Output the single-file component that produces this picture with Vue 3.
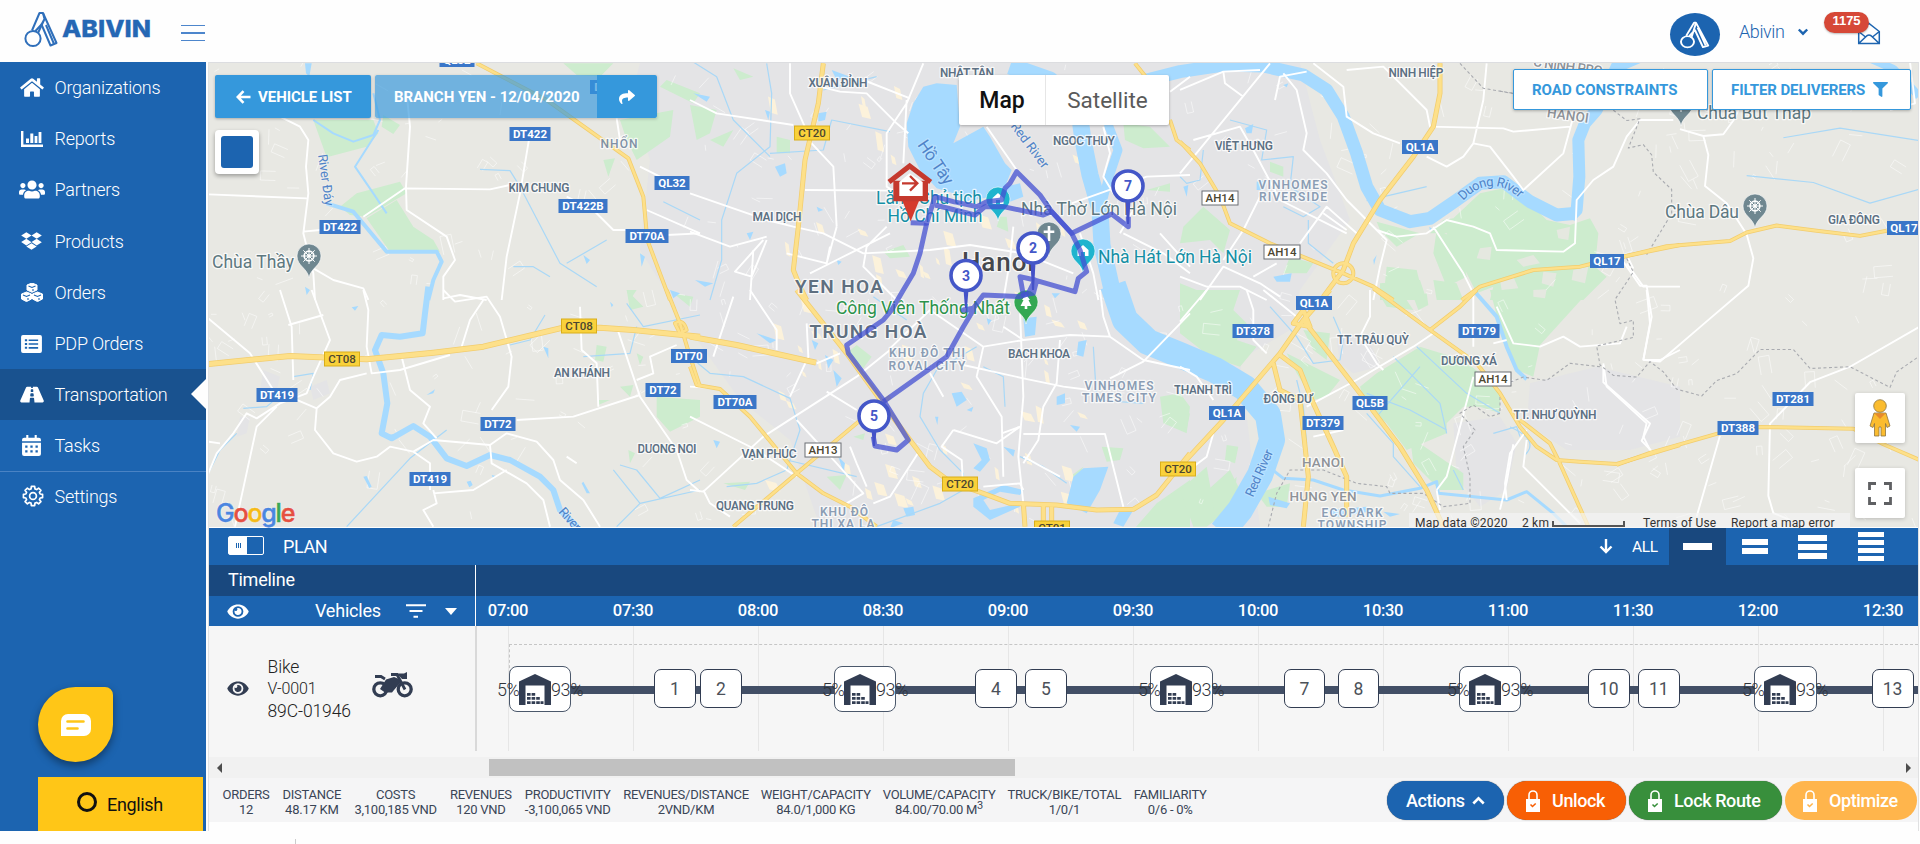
<script setup>
const faHome = 'M280.37 148.26L96 300.11V464a16 16 0 0 0 16 16l112.06-.29a16 16 0 0 0 15.92-16V368a16 16 0 0 1 16-16h64a16 16 0 0 1 16 16v95.64a16 16 0 0 0 16 16.05L464 480a16 16 0 0 0 16-16V300L295.67 148.26a12.19 12.19 0 0 0-15.3 0zM571.6 251.47L488 182.56V44.05a12 12 0 0 0-12-12h-56a12 12 0 0 0-12 12v72.61L318.47 43a48 48 0 0 0-61 0L4.34 251.47a12 12 0 0 0-1.6 16.9l25.5 31A12 12 0 0 0 45.15 301l235.22-193.74a12.19 12.19 0 0 1 15.3 0L530.9 301a12 12 0 0 0 16.9-1.6l25.5-31a12 12 0 0 0-1.7-16.93z'
const faUsers = 'M96 224c35.3 0 64-28.7 64-64s-28.7-64-64-64-64 28.7-64 64 28.7 64 64 64zm448 0c35.3 0 64-28.7 64-64s-28.7-64-64-64-64 28.7-64 64 28.7 64 64 64zm32 32h-64c-17.6 0-33.5 7.1-45.1 18.6 40.3 22.1 68.9 62 75.1 109.4h66c17.7 0 32-14.3 32-32v-32c0-35.3-28.7-64-64-64zm-256 0c61.9 0 112-50.1 112-112S381.9 32 320 32 208 82.1 208 144s50.1 112 112 112zm76.8 32h-8.3c-20.8 10-43.9 16-68.5 16s-47.6-6-68.5-16h-8.3C179.6 288 128 339.6 128 403.2V432c0 26.5 21.5 48 48 48h288c26.5 0 48-21.5 48-48v-28.8c0-63.6-51.6-115.2-115.2-115.2zm-223.7-13.4C161.5 263.1 145.6 256 128 256H64c-35.3 0-64 28.7-64 64v32c0 17.7 14.3 32 32 32h65.9c6.3-47.4 34.9-87.3 75.2-109.4z'
const faDropbox = 'M264.4 116.3l-132 84.3 132 84.3-132 84.3L0 284.1l132.3-84.3L0 116.3 132.3 32l132.1 84.3zM131.6 395.7l132-84.3 132 84.3-132 84.3-132-84.3zm132.8-111.6l132-84.3-132-83.6L395.7 32 528 116.3l-132.3 84.3L528 284.8l-132.3 84.3-131.3-85z'
const faRoad = 'M573.19 402.67l-139.79-320C428.43 71.29 417.6 64 405.68 64h-97.59l2.45 23.16c.5 4.72-3.21 8.84-7.96 8.84h-29.16c-4.75 0-8.46-4.12-7.96-8.84L267.91 64h-97.59c-11.93 0-22.76 7.29-27.73 18.67L2.8 402.67C-6.45 423.86 8.31 448 30.54 448h196.84l10.31-97.68c.86-8.14 7.72-14.32 15.91-14.32h68.8c8.19 0 15.05 6.18 15.91 14.32L348.62 448h196.84c22.23 0 36.99-24.14 27.73-45.33zM260.4 135.16a8 8 0 0 1 7.96-7.16h39.29c4.09 0 7.53 3.09 7.96 7.16l4.6 43.58c.75 7.09-4.81 13.26-11.93 13.26h-40.54c-7.13 0-12.68-6.17-11.93-13.26l4.59-43.58zM315.64 304h-55.29c-9.5 0-16.91-8.23-15.91-17.68l5.07-48c.86-8.14 7.72-14.32 15.91-14.32h45.15c8.19 0 15.05 6.18 15.91 14.32l5.07 48c1 9.45-6.41 17.68-15.91 17.68z'
const faEye = 'M572.52 241.4C518.29 135.59 410.93 64 288 64S57.68 135.64 3.48 241.41a32.35 32.35 0 0 0 0 29.19C57.71 376.41 165.07 448 288 448s230.32-71.64 284.52-177.41a32.35 32.35 0 0 0 0-29.19zM288 400a144 144 0 1 1 144-144 143.93 143.93 0 0 1-144 144zm0-240a95.31 95.31 0 0 0-25.31 3.79 47.85 47.85 0 0 1-66.9 66.9A95.78 95.78 0 1 0 288 160z'
const faShare = 'M503.691 189.836L327.687 37.851C312.281 24.546 288 35.347 288 56.015v80.053C127.371 137.907 0 170.1 0 322.326c0 61.441 39.581 122.309 83.333 154.132 13.653 9.931 33.111-2.533 28.077-18.631C66.066 312.814 132.917 274.316 288 272.085V360c0 20.7 24.3 31.453 39.687 18.164l176.004-152c11.071-9.562 11.086-26.753 0-36.328z'
const faFilter = 'M487.976 0H24.028C2.71 0-8.047 25.866 7.058 40.971L192 225.941V432c0 7.831 3.821 15.17 10.237 19.662l80 55.98C298.02 518.69 320 507.493 320 487.98V225.941l184.947-184.97C520.021 25.896 509.338 0 487.976 0z'

// Outline of an eight-toothed gear
const gear = (() => {
  const pts = []
  for (let i = 0; i < 8; i++) {
    const a = (i * Math.PI) / 4
    for (const [o, r] of [[-0.27, 7.4], [-0.17, 9.7], [0.17, 9.7], [0.27, 7.4]]) {
      pts.push(`${(12 + r * Math.cos(a + o)).toFixed(2)},${(12 + r * Math.sin(a + o)).toFixed(2)}`)
    }
  }
  return pts.join(' ')
})()

const menu = [
  { label: 'Organizations', vb: '0 0 576 512', w: 24, h: 21, d: faHome },
  { label: 'Reports', vb: '0 0 22 16', w: 22, h: 16, d: 'M0 0h2.4v13.4H22V16H0zM5 7.5h3V12H5zM9.3 2.5h3V12h-3zM13.6 5h2.8v7h-2.8zM17.6 1h2.8v11h-2.8z' },
  { label: 'Partners', vb: '0 0 640 512', w: 26, h: 21, d: faUsers },
  { label: 'Products', vb: '0 0 528 512', w: 21, h: 20, d: faDropbox },
  { label: 'Orders', cubes: true },
  { label: 'PDP Orders', vb: '0 0 22 19', w: 21, h: 18, d: 'M2 0h18a2 2 0 0 1 2 2v15a2 2 0 0 1-2 2H2a2 2 0 0 1-2-2V2a2 2 0 0 1 2-2zM4 4.5v2h2.4v-2zM8 4.7v1.7h10V4.7zM4 8.5v2h2.4v-2zM8 8.7v1.7h10V8.7zM4 12.5v2h2.4v-2zM8 12.7v1.7h10v-1.7z' },
  { label: 'Transportation', vb: '0 0 576 512', w: 24, h: 21, d: faRoad, active: true },
  { label: 'Tasks', vb: '0 0 18 20', w: 19, h: 21, d: 'M4 0h2v2.5h6V0h2v2.5h2a2 2 0 0 1 2 2V6H0V4.500a2 2 0 0 1 2-2h2zM0 7.300h18V18a2 2 0 0 1-2 2H2a2 2 0 0 1-2-2zM3 10v2.200h2.200V10zM7.900 10v2.200h2.200V10zM12.800 10v2.200H15V10zM3 14.500v2.200h2.200v-2.200zM7.900 14.500v2.200h2.200v-2.200zM12.800 14.500v2.200H15v-2.200z' },
  { label: 'Settings', gear: true, sep: true },
]

// Map tiles: each tile has its own local grid at three units per pixel
const tiles = {
  A: 'translate(200 60) scale(.33333)',
  B: 'translate(200 290) scale(.33333)',
  C: 'translate(690 60) scale(.33333)',
  D: 'translate(690 290) scale(.33333)',
  E: 'translate(1180 0) scale(.33333)',
  F: 'translate(1180 290) scale(.33333)',
  G: 'translate(1500 0) scale(.33333 .34435)',
  P: '',
}
const city = [
  ['P', 'M690 63L1300 63L1320 140L1350 220L1300 290L1290 330L1240 360L1260 527L820 527L790 440L740 400L690 330L640 250L650 160L630 100L640 63Z'],
  ['F', 'M1050 280L1250 230L1500 290L1500 440L1350 480L1160 480L1040 400Z'],
  ['F', 'M820 400L960 380L1010 460L980 600L900 650L830 560Z'],
  ['F', 'M470 150L560 130L600 230L520 250L480 220Z'],
  ['B', 'M190 240L240 260L230 300L180 300ZM330 290L380 270L390 310L340 330ZM120 380L150 380L140 430L110 440Z'],
]
const parks = [
  ['A', 'M340 180L520 180L535 220L500 260L380 292ZM470 400L600 365L620 400L500 470L450 465L420 440ZM500 475L590 420L640 500L700 540L720 575L570 575ZM550 165L600 195L580 222L545 200ZM1090 10L1240 10L1200 50L1130 45ZM1260 180L1420 150L1410 230L1310 300L1280 240ZM1400 60L1500 100L1480 130L1380 80ZM1210 300L1245 295L1225 350ZM1280 690L1310 690L1290 720Z'],
  ['B', 'M1280 0L1330 50L1290 60ZM1190 165L1220 170L1210 215L1185 210ZM1310 190L1330 200L1320 225ZM1370 320L1500 330L1500 380L1410 425L1370 380ZM1260 290L1300 285L1290 320ZM1285 480L1305 490L1290 520ZM1420 10L1480 20L1470 50ZM1195 330L1230 330L1195 345Z'],
  ['C', 'M0 135L80 150L60 220L20 240ZM60 240L130 210L100 260ZM260 230L300 240L300 280L260 280ZM1300 190L1380 200L1440 260L1360 265L1305 240ZM930 470L950 470L955 515L920 500ZM580 575L640 555L660 590L600 595ZM130 25L190 50L150 60ZM1370 390L1440 370L1440 395Z'],
  ['D', 'M470 190L500 165L545 200L520 235ZM490 440L525 430L520 450ZM1410 320L1470 310L1500 350L1490 430L1420 400ZM1235 470L1300 475L1290 510L1250 515ZM1400 640L1500 570L1500 720L1330 720ZM410 560L470 555L450 600ZM1140 560L1180 530L1160 570ZM100 580L180 575L165 600Z'],
  ['E', 'M820 655L900 580L970 565L1040 600L1100 660L1170 675L1230 655L1255 700L1245 800L1280 830L1210 900L930 900L940 860L890 880L800 700L750 700L790 660ZM590 665L720 700L650 740L600 690ZM70 620L150 690L130 760L90 720L0 730L10 680ZM620 800L710 810L720 850L680 870L615 850ZM770 690L840 720L860 830L800 860L760 760ZM0 850L50 870L30 900L0 900ZM270 485L310 500L310 530L270 515ZM330 770L400 790L380 820L310 820ZM600 850L720 840L740 900L600 900ZM760 840L830 850L850 900L770 900Z'],
  ['F', 'M0 0L180 0L160 60L200 100L170 150L230 170L180 230L90 200L0 130ZM320 190L480 270L440 320L400 330L350 250ZM370 120L450 130L440 210L400 180ZM590 250L720 170L850 210L900 250L960 300L960 370L900 350L850 350L800 400L800 430L680 480L620 400L560 350L540 290ZM930 0L1230 0L1080 165L1060 260L1010 240L970 150ZM690 440L850 550L850 600L780 600L700 520ZM0 600L80 530L100 640L170 560L160 650L80 710L40 710ZM140 465L175 470L165 520L135 510ZM230 610L330 580L320 650L260 650ZM0 380L30 370L20 420ZM700 20L740 10L745 45L715 60ZM590 0L660 0L700 60L620 50Z'],
  ['P', 'M1210 488L1230 470L1245 500L1215 520Z'],
]
// Pale clearings inside the eastern parkland
const clearings = [
  ['E', 'M900 745L935 740L930 780L890 775ZM1010 780L1060 765L1080 790L1030 800ZM1130 690L1170 680L1165 720L1135 715ZM1090 815L1130 820L1120 860L1085 850ZM1180 810L1225 800L1215 850L1175 840ZM960 840L1000 830L1015 865L965 870ZM1060 870L1100 868L1095 895L1060 890Z'],
]
const waterFill = [
  ['C', 'M700 80L740 70L800 75L810 200L790 250L880 200L900 230L945 310L965 330L945 380L990 370L1000 410L960 425L900 410L830 425L790 400L740 385L690 330L655 260L650 190L670 130Z'],
  ['D', 'M1000 85L1040 80L1035 135L1005 140ZM850 460L890 475L900 510L870 545L850 535L875 510ZM785 310L815 305L830 330L800 350ZM1180 535L1255 530L1230 600L1190 670L1130 640L1150 560ZM1000 600L940 585L850 625L850 650L900 690L990 650L985 640L900 660L880 630L930 605L990 615ZM1290 660L1330 660L1300 710L1270 700ZM365 150L385 160L375 180ZM405 195L430 210L415 235ZM430 240L455 265L440 290ZM640 655L670 650L675 675L650 680ZM940 470L975 480L970 500ZM1100 320L1125 310L1125 340L1100 345ZM1140 405L1170 410L1160 425ZM70 450L90 455L80 475ZM200 130L260 150L240 160ZM610 690L640 700L600 715ZM890 85L905 90L895 105ZM1165 155L1190 150L1180 200L1160 195ZM735 380L745 380L742 405ZM830 360L850 350L845 365ZM445 500L465 520L460 545ZM550 395L560 420L552 425Z'],
  ['C', 'M425 30L480 50L440 60ZM255 320L285 310L290 340L270 350ZM225 150L240 155L235 180ZM385 160L410 155L405 180L385 185ZM10 100L60 110L50 125ZM170 520L190 515L180 540ZM15 660L70 670L45 680ZM380 440L400 450L385 455ZM440 600L455 605L445 615ZM1085 700L1110 700L1095 715Z'],
  ['E', 'M195 385L220 372L215 400L200 400ZM10 560L25 555L20 590ZM280 830L335 820L330 845L290 845ZM230 545L260 540L250 570L230 570ZM580 780L590 765L582 795ZM748 680L760 690L750 692ZM310 255L325 250L320 262Z'],
  ['B', 'M490 560L500 558L515 590L508 594ZM800 575L812 572L818 585L808 592ZM455 52L475 48L465 62ZM680 315L705 298L700 310ZM875 555L888 558L880 566ZM1145 580L1150 575L1170 610L1160 610ZM1030 170L1045 175L1045 205ZM1230 35L1240 45L1235 52ZM560 435L580 433L575 442Z'],
  ['A', 'M315 10L335 10L328 50L318 40ZM315 680L330 690L320 705ZM1150 585L1170 600L1160 612ZM1410 690L1440 700L1420 715ZM1320 580L1335 590L1325 620Z'],
  ['F', 'M265 620L330 640L320 655L270 645ZM440 660L560 650L570 665L470 680ZM610 665L660 672L630 680Z'],
]
const rivers = [
  ['P', 9, 'M1108 124L1118 150L1108 180L1100 210'],
  ['P', 17, 'M1010 66L1050 80L1078 105L1083 140L1090 175L1100 210L1102 245L1112 290'],
  ['P', 26, 'M1113 285L1125 320L1148 342L1180 355L1215 370L1245 388L1268 415L1272 440L1260 475L1240 510L1222 532'],
  ['E', 13, 'M-300 300L-100 240L0 215L130 195L250 198L370 225L440 270L490 350L530 460L560 560L600 630L690 665L750 655L830 600L900 550L970 545L1050 605L1130 645L1190 640'],
  ['E', 12, 'M1170 650L1190 630L1198 530L1195 420L1215 370L1250 330L1310 200L1380 170'],
  ['G', 8, 'M1110 170L1180 200L1230 250L1257 280'],
  ['A', 4, 'M380 430L460 455L560 575L710 575L725 605L700 660L685 720'],
  ['B', 6, 'M685 -10L675 70L668 130L600 140L545 135L525 180L550 250L562 340L545 430L575 445L640 408L690 440L740 505L800 528L870 495L930 510L1020 560L1060 600L1080 660L1130 710'],
  ['A', 2, 'M340 180L400 220L460 245L520 225L540 180L520 100M535 210L465 320L520 400L560 460'],
  ['F', 4, 'M880 0L950 80L980 170L1010 240L1040 268'],
  ['F', 3, 'M265 530L310 565L400 570L490 600L600 618L720 595L770 575L775 610L980 630L1040 605L1120 670L1160 710'],
]
const streams = [
  ['C', 'M230 10L245 100L240 260L140 340L95 480L95 600L60 720M0 0L80 50L130 180L240 290M240 280L400 270L425 180L600 215M400 90L560 50'],
  ['A', 'M840 328L930 332L960 380L1080 610L1190 680M1100 610L1220 540M940 620L1000 620L1050 650M1390 425L1500 480'],
  ['D', 'M0 200L60 250L160 260L300 325L330 420L290 540L200 580L110 590M860 170L740 240L700 310L690 380L750 480L820 550L820 600L750 640L560 710M880 230L940 260L945 350M1210 170L1220 330L1360 340M990 500L1060 530L1130 580M550 20L650 90M290 510L500 560'],
  ['E', 'M150 360L260 390L245 480L340 470L330 560L420 620L370 650L310 620M385 660L385 730L460 790M740 560L560 602M0 530L20 550L60 540L70 450'],
  ['F', 'M270 50L350 140L400 220L480 210L490 150L460 80M350 270L370 350L380 460M560 370L640 460L640 500L720 590M710 170L860 310L960 370M640 200L780 340L800 430M590 380L720 230M560 310L690 360L800 420M820 540L850 600M940 430L1010 410L1020 440'],
  ['B', 'M440 710L630 505L740 420M25 550L60 480L110 430M130 355L200 350L235 320M930 165L990 150L1035 75M1240 540L1320 640L1500 600M1320 640L1250 710M1260 525L1310 540L1380 625L1500 570M1280 40L1330 110L1500 75M1150 200L1290 190L1310 110M280 260L340 250L330 300'],
  ['G', 'M740 510L940 530L1110 590L1257 550M850 400L1020 372L1257 408'],
  ['P', 'M1510 427Q1540 440 1525 455'],
]
const roads = [
  ['A', 'M240 170L300 200L325 240L318 320L325 400L310 520L340 640L345 720M25 403L320 415M310 515L360 510M620 100L630 200L618 380L620 450L740 530L765 600L730 650L730 720M490 470L615 385L870 388L930 375M990 220L960 400L920 590L905 720M340 625L400 660L490 685L505 720M1100 410L1180 450L1240 510L1290 510M1340 450L1500 520M1320 320L1380 350M1400 525L1500 520M730 715L780 705L860 720M1250 175L1260 240'],
  ['B', 'M335 0L390 150L340 260L320 310L240 340L170 385L140 370L100 430L50 490L25 550M490 0L505 60L500 170L515 250L600 240L750 195M240 0L275 110L280 270M265 105L370 75M25 85L150 190L220 300L350 355L345 420L400 490L470 515L530 500L570 470L640 485L700 450L870 465L920 430L1010 455L1060 510L1080 570L1150 630L1200 710M605 200L630 300L690 350L670 400L710 445M730 0L765 35L860 20L900 80L935 200L925 290L875 360M850 30L810 90L785 170M950 390L1120 380L1320 315M870 465L875 520L980 580L1030 630L1050 710M1255 125L1320 320L1430 480L1460 570L1500 605M1140 50L1145 180L1190 220L1195 350M230 350L170 410L120 640L105 710M500 250L420 270L390 320L350 355M700 600L710 640L670 660L700 710M25 455L60 460M700 610L820 600L920 540M640 485L690 520L690 600M1310 270L1360 250L1350 200L1430 165M1100 500L1130 520'],
  ['C', 'M300 10L300 100L340 190L365 250L430 320L440 500M390 80L450 95L530 100L620 190L655 220M520 60L660 115M700 10L650 130L590 220L590 380L620 400M650 120L640 310M0 120L80 160L310 195M345 390L620 392M0 400L230 480L310 500L400 520L520 580L720 570L840 555L1000 580L1150 640M0 515L120 560L230 530M220 540L135 635L185 650L230 540M420 560L410 610L290 580M890 200L980 330M590 500L530 560L520 620L620 720M440 500L410 610M190 570L180 720M1240 200L1260 280L1240 350L1270 400M1145 430L1370 350L1500 345M1300 520L1420 580L1500 640M1170 520L1210 640L1225 720M970 500L960 600L940 720M1330 450L1290 520M1410 520L1500 620M1440 95L1500 50M360 640L440 600L600 520'],
  ['D', 'M180 0L260 120L260 180M350 100L355 200L300 320M0 600L40 605L220 440L500 260L600 180M40 600L60 640L120 680M380 220L450 190M410 305L500 360M320 390L440 520L520 610L470 640M480 470L500 520L530 590M600 175L720 60L880 170L1000 150L1140 135L1260 140L1360 210L1500 240M1500 70L1360 215L1260 265M820 225L1000 265L1120 290L1200 300M990 60L1000 320L985 500L1000 640M880 170L860 260L935 380L940 560M1110 150L1100 280L1060 350L1045 450L1000 520M1000 432L1245 432L1300 650M935 430L990 410M1230 0L1240 80L1260 140M790 420L920 460L990 410M790 420L755 470L815 510L820 600M690 480L600 620L550 640M880 590L990 580L1000 600M1000 500L1110 560M940 110L1000 150M760 320L720 250M0 290L90 295M130 20L70 200M0 380L200 480L320 560'],
  ['E', 'M0 520L270 190M0 270L130 215L240 210M130 215L135 250L190 290M0 830L80 860L180 860L260 900M60 900L130 800L240 850L300 890M40 420L180 380L220 450L300 600L500 700M130 780L190 690L240 590M380 215L300 230L285 300M310 220L350 270L380 400L370 450L440 520L500 600L620 720L600 800L580 900M400 190L490 260L500 350L580 400L660 430M500 210L610 200L740 330L750 380L970 385L1000 395L1170 380M920 190L910 300L880 430L850 470L800 500L740 470M880 430L930 440L1000 530L1030 570L1150 460L1180 350M590 690L650 710L740 700L800 660L880 680L930 700L950 750L1150 755L1185 730L1190 600L1240 540L1300 500L1340 410L1380 360L1480 360M760 680L850 820L880 880M360 730L440 620L530 700M430 640L500 690M220 830L290 790M1340 790L1390 860L1500 860'],
  ['F', 'M0 95L80 0M200 0L220 60L220 150L260 190M250 0L350 80M570 0L570 80L540 140L590 220L610 240M380 350L530 270L700 170L760 130M880 260L800 560L770 600M990 280L1000 270M880 0L880 170M980 150L940 160M950 50L1000 160L1080 170L1150 140L1200 170L1320 160L1340 110M1270 220L1280 290L1400 400L1390 440L1410 480M1040 420L990 490L975 580L980 630M1040 450L1030 530L1090 590L1200 700M0 230L50 260L100 330M100 430L80 500L40 530M400 440L490 420M770 600L780 660M1500 180L1440 210L1390 210M1400 0L1410 100L1390 210'],
  ['G', 'M540 375L610 395L625 450L615 540L680 590L740 680L760 750L745 830L600 950L480 1050L430 1045L455 920L440 830L420 830L370 760M310 1060L310 1110L450 1230L425 1280L455 1310M610 395L670 390L700 350L720 310M1257 950L1050 1065L930 1110L810 1230L805 1440L820 1490L870 1510M660 1265L590 1500M380 740L400 780M1230 180L1245 300L1170 320M0 1480L20 1400L40 1290'],
]
const highways = [
  ['B', 6, 'M25 222L270 198L500 208L700 188L850 170L1080 115L1200 113L1300 120L1500 140'],
  ['D', 6, 'M0 140L140 165L378 218'],
  ['A', 4, 'M830 10L1040 120L1285 295L1330 410L1342 540L1410 720'],
  ['B', 4, 'M1400 0L1440 100L1470 200L1500 290M1425 100Q1450 85 1460 120L1440 130Z'],
  ['D', 4, 'M0 230L20 285L90 297L180 380L320 550L400 610L480 650L560 710M130 710L320 550L500 400L600 320'],
  ['C', 5, 'M400 10L385 130L345 300L325 500L310 630L330 680L350 720'],
  ['D', 5, 'M320 0L470 190L600 370L720 530L780 575L880 610L960 640L1100 645L1220 660L1330 658L1400 615L1500 490M1000 640L1005 710M1060 640L1060 710M1085 640L1085 710'],
  ['F', 5, 'M0 530L130 390L300 190L370 90L450 0M370 90L540 310L660 470L740 600L790 710M300 195L360 240L400 340L460 470L500 560L500 680M280 220L300 300L360 330L385 560L370 710M340 100L370 60L390 110Z'],
  ['E', 5, 'M430 890L490 810L520 730L600 600L700 470L760 380L780 280L780 190'],
  ['E', 4, 'M0 425L60 490L120 590L150 670L270 730L380 775L490 820L580 860L640 900M845 900L900 860L1060 810L1200 800L1280 780L1500 735M460 820A30 30 0 1 0 520 820A30 30 0 1 0 460 820'],
  ['F', 4, 'M580 -5L750 120L890 220L960 310L1020 410L1070 470L1130 510L1200 515L1310 522L1500 465M1020 390L1110 460L1135 510L1225 710M750 120L840 50L890 0'],
  ['G', 4, 'M350 1350L450 1315L650 1260L780 1240L1060 1245L1150 1290L1257 1335M360 748L500 715L690 700L740 675L830 655L950 670L1080 685L1160 670'],
  ['C', 4, 'M1335 10L1375 60M1440 180L1460 240L1500 270'],
]
const borders = [
  ['G', 'M340 320L380 350L420 345L385 430L430 420L455 450L460 500L515 550L515 620L440 740M0 265L60 275M380 750L400 790L345 870L360 940L400 930L400 980L290 1005L300 1060L340 1090L410 1095L450 1050L490 1080L530 1130L605 1150L650 1105L710 1085L780 1015L880 1015L930 1070L1050 1065L1170 1125L1190 1080L1257 1035M300 1065L210 1055L140 1105L70 1095L30 1110'],
  ['E', 'M840 190L910 265L1000 280'],
  ['F', 'M265 710L290 610L330 540L430 540L530 580L620 590L630 610L730 610L790 650L870 640L870 560L850 470L885 420L840 370L880 345L930 380L960 370L960 300'],
]

// Side streets, scattered with a small seeded generator so that every render is alike
let seed = 7
const rnd = () => ((seed = (seed * 16807) % 2147483647) / 2147483647)
const lanes = []
for (let i = 0; i < 480; i++) {
  const x = 212 + rnd() * 1700
  const y = 66 + rnd() * 455
  const a = rnd() * 6.28
  const l = 4 + rnd() * 15
  const c = Math.cos(a) * l
  const s = Math.sin(a) * l
  lanes.push(`M${x.toFixed(1)} ${y.toFixed(1)}l${c.toFixed(1)} ${s.toFixed(1)}`)
  if (rnd() > 0.6) lanes.push(`l${(s * 0.6).toFixed(1)} ${(-c * 0.6).toFixed(1)}l${(-c).toFixed(1)} ${(-s).toFixed(1)}`)
}
const lanePath = lanes.join('')
const blocks = []
for (let i = 0; i < 75; i++) {
  const x = 760 + rnd() * 320
  const y = 80 + rnd() * 430
  const w = 3 + rnd() * 8
  const h = 4 + rnd() * 14
  if (x > 900 && x < 1030 && y > 60 && y < 205) continue
  blocks.push(`M${x.toFixed(1)} ${y.toFixed(1)}l${w.toFixed(1)} 3l${(w * 0.4).toFixed(1)} ${h.toFixed(1)}l${(-w).toFixed(1)} -2z`)
}
const blockPath = blocks.join('')

const labels = [
  ['XUÂN ĐỈNH', 838, 82.500, 'town', 59], ['NHẬT TÂN', 967, 73, 'town', 54], ['NGOC THUY', 1084, 141, 'town', 62],
  ['MAI DỊCH', 777, 216.500, 'town', 49], ['YEN HOA', 839, 286, 'big', 88], ['TRUNG HOÀ', 868, 331, 'big', 117],
  ['Hanoi', 998, 262, 'hanoi', 72],
  ['Lăng Chủ tịch', 929, 198, 'poi teal', 106], ['Hồ Chí Minh', 935, 216, 'poi teal', 95],
  ['Nhà Thờ Lớn Hà Nội', 1099, 209, 'poi slate', 156], ['Nhà Hát Lớn Hà Nội', 1175, 257, 'poi teal', 154],
  ['Công Viên Thống Nhất', 923, 308, 'poi green', 174],
  ['KHU ĐÔ THỊ', 927, 353, 'area', 76], ['ROYAL CITY', 927, 365.500, 'area', 77], ['BACH KHOA', 1039, 354, 'town', 62],
  ['VINHOMES', 1119, 386, 'area', 69], ['TIMES CITY', 1119, 398, 'area', 74], ['THANH TRÌ', 1203, 390, 'town', 58],
  ['VẠN PHÚC', 769, 454, 'town', 55], ['QUANG TRUNG', 755, 506, 'town', 78],
  ['KHU ĐÔ', 844, 512, 'area', 48], ['THỊ XA LA', 843, 524, 'area', 63],
  ['DUONG NOI', 667, 449, 'town', 59], ['AN KHÁNH', 582, 373, 'town', 56], ['KIM CHUNG', 539, 188, 'town', 61], ['NHỔN', 619, 144, 'townlight', 37],
  ['Chùa Thầy', 253, 262, 'poi slate', 82], ['VIỆT HƯNG', 1244, 146, 'town', 58],
  ['VINHOMES', 1293, 185, 'area', 69], ['RIVERSIDE', 1293, 197, 'area', 68], ['NINH HIỆP', 1416, 73, 'town', 55],
  ['Chùa Bút Tháp', 1754, 113, 'poi slate', 114], ['Chùa Dâu', 1702, 212, 'poi slate', 74], ['GIA ĐÔNG', 1854, 220, 'town', 52],
  ['TT. TRÂU QUỲ', 1373, 340, 'town', 72], ['DƯƠNG XÁ', 1469, 361, 'town', 56], ['ĐÔNG DƯ', 1288, 399, 'town', 49],
  ['TT. NHƯ QUỲNH', 1555, 415, 'town', 83], ['HANOI', 1323, 462, 'prov', 42], ['HUNG YEN', 1323, 496, 'prov', 67],
  ['ECOPARK', 1352, 513, 'area', 61], ['TOWNSHIP', 1352, 525, 'area', 69],
  ['Hồ Tây', 936, 162, 'water lake', 50, 56], ['Red River', 1030, 145, 'water', 54, 53], ['River Đáy', 326, 180, 'water', 52, 82],
  ['Red River', 1259, 473, 'water', 50, -66], ['River', 570, 519, 'water', 26, 48],
  ['HANOI', 1568, 115, 'prov', 42, 8], ['C NINH PRO', 1568, 66, 'prov', 70, 8],
]
const shields = [
  ['DT422', 340, 227, 41], ['DT422', 530, 134, 41], ['QL32', 672, 183, 35], ['DT422B', 583, 206, 49], ['DT70A', 647, 236, 43],
  ['QL32', 457, 60, 35], ['DT70', 608, 87, 36], ['CT08', 579, 326, 35, 'y'], ['CT08', 342, 359, 35, 'y'], ['DT419', 277, 395, 41], ['DT72', 663, 390, 35],
  ['DT72', 498, 424, 35], ['DT419', 430, 479, 41], ['DT70', 689, 356, 36], ['DT70A', 735, 402, 43], ['CT20', 812, 133, 35, 'y'],
  ['AH13', 823, 450, 36, 'w'], ['CT20', 960, 484, 35, 'y'], ['CT01', 1052, 528, 35, 'y'], ['CT20', 1178, 469, 35, 'y'],
  ['AH14', 1220, 198, 36, 'w'], ['AH14', 1282, 252, 36, 'w'], ['QL1A', 1420, 147, 36], ['QL1A', 1314, 303, 36], ['DT378', 1253, 331, 41],
  ['DT179', 1479, 331, 41], ['AH14', 1493, 379, 36, 'w'], ['QL1A', 1227, 413, 36], ['QL5B', 1370, 403, 35], ['DT379', 1323, 423, 41],
  ['QL17', 1607, 261, 34], ['QL17', 1904, 228, 34], ['DT281', 1793, 399, 41], ['DT388', 1738, 428, 41],
]
const pins = [
  [309, 256, '#6f8790', 'wheel'], [1681, 104, '#6f8790', 'wheel'], [1755, 206, '#6f8790', 'wheel'],
  [998, 199, '#1fb4ce', 'art'], [1083, 251, '#1fb4ce', 'art'], [1049, 234, '#6f8790', 'cross'], [1026, 302, '#34a853', 'tree'],
]
const routes = [
  ['C', 'M662 488L710 490L735 410L790 425L860 440L890 425L935 420L945 385L960 370L980 335L1050 405L1085 455L1145 520L1170 570L1190 635L1165 655L1155 695L1040 662L1030 700L1000 705L990 650L1035 660L1010 710'],
  ['C', 'M735 435L855 465L885 440L940 440L1060 465L1085 455L1145 520L1265 462L1315 500L1315 470'],
  ['C', 'M710 490L690 580L670 640L640 690L605 750L580 780L470 855L475 880L580 1020L655 1140L620 1170L555 1158L550 1130'],
  ['C', 'M580 1025L770 890L820 800L850 750L820 750L850 745L880 705L990 710L1015 700'],
]
const stops = [[7, 1128, 186, 224], [2, 1033, 248, 290], [3, 966, 275.500, 308], [5, 874, 416, 446]]

const ticks = ['07:00', '07:30', '08:00', '08:30', '09:00', '09:30', '10:00', '10:30', '11:00', '11:30', '12:00', '12:30']
const tickLeft = (i) => `${32 + i * 125}px`
const depots = [[33, 62], [358, 62], [674, 63], [983, 62], [1278, 63]]
const visits = [[1, 178, 42], [2, 224, 42], [4, 499, 42], [5, 549, 42], [7, 808, 41], [8, 862, 41], [10, 1112, 41.500], [11, 1162, 41.500], [13, 1395.500, 42]]

const stats = [
  ['ORDERS', '12', 47], ['DISTANCE', '48.17 KM', 59], ['COSTS', '3,100,185 VND', 83], ['REVENUES', '120 VND', 62], ['PRODUCTIVITY', '-3,100,065 VND', 86],
  ['REVENUES/DISTANCE', '2VND/KM', 125], ['WEIGHT/CAPACITY', '84.0/1,000 KG', 109], ['VOLUME/CAPACITY', '84.00/70.00 M', 112], ['TRUCK/BIKE/TOTAL', '1/0/1', 113], ['FAMILIARITY', '0/6 - 0%', 73],
]
</script>

<template>
  <div class="page">
    <header class="top">
      <svg class="logo" width="34" height="37" viewBox="0 0 34 37">
        <g fill="none" stroke="#2f6fba" stroke-width="2" stroke-linejoin="round">
          <circle cx="9" cy="27.500" r="7.600" />
          <path d="M8 19.500L15.500 2h3.500L32.500 32L26.500 34.500L17.500 13.500L11 20.500" />
          <path d="M19 2L20.500 8L14 22M20.500 8L17.500 13.500M22 14L30 33" />
        </g>
      </svg>
      <svg class="brand" width="96" height="26" viewBox="0 0 96 26"><text x="1" y="20.300" textLength="89" lengthAdjust="spacingAndGlyphs">ABIVIN</text></svg>
      <div class="burger"><i></i><i></i><i></i></div>
      <div class="user">
        <span class="avatar">
          <svg width="30" height="28" viewBox="0 0 34 37" preserveAspectRatio="none">
            <g fill="none" stroke="#fff" stroke-width="2.200" stroke-linejoin="round">
              <circle cx="8.500" cy="27.500" r="7.400" />
              <path d="M7 19.500L16 2h2L32 32.500L26 34.500L17 12L10.500 20M18 3L13 22M20 9L29 32" />
            </g>
          </svg>
        </span>
        <span class="name">Abivin</span>
        <svg class="chev" width="12" height="8" viewBox="0 0 12 8"><path d="M1.800 1.500L6 5.700L10.200 1.500" fill="none" stroke="#1c64b0" stroke-width="2.400" /></svg>
        <span class="mail">
          <svg width="24" height="24" viewBox="0 0 24 24"><path d="M1.700 9.500L12 1.500L22.300 9.500V21.500H1.700ZM1.700 9.500L8.500 15L1.700 21.500M22.300 9.500L15.500 15L22.300 21.500M8.500 15Q12 11 15.500 15" fill="none" stroke="#1c64b0" stroke-width="1.500" /></svg>
          <b class="count">1175</b>
        </span>
      </div>
    </header>

    <div class="body">
      <aside class="side">
        <nav>
          <a v-for="m in menu" :key="m.label" class="item" :class="{ active: m.active, sep: m.sep }">
            <span class="ico">
              <svg v-if="m.cubes" width="22" height="19" viewBox="0 0 22 19">
                <path d="M11 0l5 2v5l-5 2.300L6 7V2zM5.500 9l5 2v5l-5 2.600L.5 16v-5zM16.500 9l5 2v5l-5 2.600l-5-2.600v-5z" fill="#fff" stroke="#fff" stroke-linejoin="round" />
                <path d="M7.500 3l3.500 1.400L14.500 3M12 8V6M2 12l3.500 1.500L9 12M7 17v-2M13 12l3.500 1.500L20 12M18 17v-2" fill="none" stroke="#1c64b0" stroke-width="1.100" />
              </svg>
              <svg v-else-if="m.gear" width="24" height="24" viewBox="0 0 24 24" class="gear">
                <polygon :points="gear" fill="none" stroke="#fff" stroke-width="1.700" stroke-linejoin="round" />
                <circle cx="12" cy="12" r="3.400" fill="none" stroke="#fff" stroke-width="1.700" />
              </svg>
              <svg v-else :width="m.w" :height="m.h" :viewBox="m.vb"><path :d="m.d" fill="#fff" fill-rule="evenodd" /></svg>
            </span>
            {{ m.label }}
          </a>
        </nav>
        <div class="chat">
          <svg width="30" height="22" viewBox="0 0 30 22"><path d="M7 0h16a7 7 0 0 1 7 7v8a7 7 0 0 1-7 7H0V7a7 7 0 0 1 7-7z" fill="#fff" /><path d="M6.500 7.500h16M6.500 14.500h10" stroke="#ffc617" stroke-width="2.600" stroke-linecap="round" /></svg>
        </div>
        <div class="lang"><i></i>English</div>
      </aside>

      <main class="main">
        <section class="map">
          <svg class="canvas" width="1709" height="464" viewBox="209 63 1709 464">
            <rect x="209" y="63" width="1709" height="464" fill="#e8e8e3" />
            <path v-for="(s, i) in city" :key="'c' + i" :transform="tiles[s[0]]" :d="s[1]" fill="#e4e4e6" />
            <path v-for="(s, i) in parks" :key="'p' + i" :transform="tiles[s[0]]" :d="s[1]" fill="#cdecce" />
            <path v-for="(s, i) in clearings" :key="'g' + i" :transform="tiles[s[0]]" :d="s[1]" fill="#e5e8e0" />
            <path :d="blockPath" fill="#fcf2db" />
            <path :d="lanePath" fill="none" stroke="#fff" stroke-width="1" opacity=".5" />
            <path v-for="(s, i) in waterFill" :key="'w' + i" :transform="tiles[s[0]]" :d="s[1]" fill="#a6daff" />
            <path v-for="(s, i) in streams" :key="'s' + i" class="ln" :transform="tiles[s[0]]" :d="s[1]" stroke="#a9d8f7" stroke-width="1.200" />
            <path v-for="(s, i) in rivers" :key="'r' + i" class="ln" :transform="tiles[s[0]]" :d="s[2]" stroke="#a6daff" :stroke-width="s[1]" />
            <path v-for="(s, i) in roads" :key="'d' + i" class="ln" :transform="tiles[s[0]]" :d="s[1]" stroke="#fff" stroke-width="1.900" />
            <path v-for="(s, i) in borders" :key="'b' + i" class="ln" :transform="tiles[s[0]]" :d="s[1]" stroke="#a9abb0" stroke-width="1.100" stroke-dasharray="3 2.500" />
            <path v-for="(s, i) in highways" :key="'h' + i" class="ln" :transform="tiles[s[0]]" :d="s[2]" stroke="#f2cd6e" :stroke-width="s[1]" />
            <path v-for="(s, i) in highways" :key="'i' + i" class="ln" :transform="tiles[s[0]]" :d="s[2]" stroke="#fde08a" :stroke-width="s[1] - 1.500" />

            <g v-for="(p, i) in pins" :key="'n' + i" :transform="`translate(${p[0]} ${p[1]})`">
              <path d="M0 22C-1.500 12 -12 10 -12 0A12 12 0 0 1 12 0C12 10 1.500 12 0 22Z" :fill="p[2]" stroke="#fff" stroke-width=".6" />
              <g v-if="p[3] === 'wheel'" fill="none" stroke="#fff">
                <circle r="4.800" stroke-width="1.700" /><circle r="1.300" /><path d="M0-8V8M-8 0H8M-5.700-5.700L5.700 5.700M5.700-5.700L-5.700 5.700" stroke-width="1" />
              </g>
              <path v-else-if="p[3] === 'cross'" d="M-1.300-8h2.600v4.500h4v2.400h-4V7h-2.600V-1.100h-4v-2.400h4z" fill="#fff" />
              <path v-else-if="p[3] === 'tree'" d="M0-8L4-2H2.500L5.500 4H1.300V7H-1.300V4H-5.500L-2.500-2H-4z" fill="#fff" />
              <path v-else d="M-5.500-1L0-6L5.500-1V5H2V1H-2V5H-5.500Z" fill="#fff" />
            </g>

            <path id="duong" d="M1463 201Q1477 186 1493 186Q1510 187 1524 203" fill="none" />
            <text class="mt water flat"><textPath href="#duong" textLength="64">Duong River</textPath></text>
            <text v-for="(l, i) in labels" :key="'l' + i" class="mt" :class="l[3]" :x="l[1]" :y="l[2]" :textLength="l[4]" lengthAdjust="spacing" :transform="l[5] ? `rotate(${l[5]} ${l[1]} ${l[2]})` : null">{{ l[0] }}</text>
            <g v-for="(s, i) in shields" :key="'x' + i" class="sh" :class="s[4]">
              <rect :x="s[1] - s[3] / 2" :y="s[2] - 7" :width="s[3]" height="14" />
              <text :x="s[1]" :y="s[2] + 4.200">{{ s[0] }}</text>
            </g>

            <path v-for="(s, i) in routes" :key="'t' + i" class="ln" :transform="tiles[s[0]]" :d="s[1]" stroke="#4451d2" stroke-width="5" opacity=".75" />
            <g transform="translate(690 60) scale(.33333)">
              <path d="M636 420L662 484L688 420Z" fill="#d53a2c" />
              <path d="M610 362h104v62h-104z" fill="#c5392e" />
              <path d="M628 366L659 340L698 366V408H628Z" fill="#fff" />
              <path d="M597 366L659 318L722 366" fill="none" stroke="#c5392e" stroke-width="15" />
              <path d="M636 370h42M660 348l22 22l-22 22" fill="none" stroke="#c5392e" stroke-width="7" />
            </g>
            <g v-for="s in stops" :key="'m' + s[0]">
              <path :d="`M${s[1] - 2.5} ${s[2] + 14}h5L${s[1] + 1} ${s[3]}h-2z`" fill="#4451c8" />
              <circle :cx="s[1]" :cy="s[2]" r="15" fill="#fff" stroke="#4457c8" stroke-width="3.600" />
              <text class="stop" :x="s[1]" :y="s[2] + 5">{{ s[0] }}</text>
            </g>
          </svg>

          <div class="crumbs">
            <button class="pb list">
              <svg width="15" height="14" viewBox="0 0 15 14"><path d="M7.500 1.200L1.800 7l5.700 5.800M2 7h12.500" fill="none" stroke="#fff" stroke-width="2.600" /></svg>
              <span>VEHICLE LIST</span>
            </button>
            <div class="pair">
              <button class="pb branch">BRANCH YEN - 12/04/2020</button>
              <button class="pb go"><svg width="16" height="16" viewBox="0 0 512 512"><path :d="faShare" fill="#fff" /></svg></button>
            </div>
          </div>
          <div class="swatch"><i></i></div>
          <div class="kinds"><b>Map</b><span>Satellite</span></div>
          <div class="tools">
            <button class="ob">ROAD CONSTRAINTS</button>
            <button class="ob filt">FILTER DELIVERERS <svg width="15" height="15" viewBox="0 0 512 512"><path :d="faFilter" fill="#3598dc" /></svg></button>
          </div>
          <div class="square peg">
            <svg width="22" height="38" viewBox="0 0 22 38"><g fill="#fbbc2f" stroke="#8d7440" stroke-width=".8"><path d="M5 14h12l4 13l-3 1.500l-1.500-4V37H12V28h-2v9H5.500V24.500L4 28.500L1 27Z" /><circle cx="11" cy="7" r="6.300" /></g><path d="M5.500 14.500L11 20L16.500 14.500" fill="#e8892b" /></svg>
          </div>
          <div class="square full">
            <svg width="24" height="23" viewBox="0 0 24 23"><path d="M1.500 8V1.500H8M16 1.500h6.500V8M22.500 15v6.500H16M8 21.500H1.500V15" fill="none" stroke="#5f6063" stroke-width="2.800" /></svg>
          </div>
          <div class="google"><i class="b">G</i><i class="r">o</i><i class="y">o</i><i class="b">g</i><i class="g">l</i><i class="r">e</i></div>
          <div class="credit"><span class="c1">Map data ©2020</span><span class="c2">2 km <i></i></span><span class="c3">Terms of Use</span><span class="c4">Report a map error</span></div>
        </section>

        <section class="plan">
          <div class="switch"><i><u></u><u></u><u></u></i></div>
          <span class="ptitle">PLAN</span>
          <div class="dens">
            <svg class="down" width="14" height="15" viewBox="0 0 14 15"><path d="M7 0v12.500M1.500 7.500L7 13l5.500-5.500" fill="none" stroke="#fff" stroke-width="2.400" /></svg>
            <span class="all">ALL</span>
            <span class="d1"><i></i></span>
            <span class="d2"><i></i><i></i></span>
            <span class="d3"><i></i><i></i><i></i></span>
            <span class="d4"><i></i><i></i><i></i><i></i></span>
          </div>
        </section>
        <section class="tl"><div class="cell">Timeline</div></section>
        <section class="vh">
          <div class="cell">
            <svg class="eye" width="22" height="19" viewBox="0 0 576 512"><path :d="faEye" fill="#fff" /></svg>
            <span class="vt">Vehicles</span>
            <svg class="sort" width="20" height="14" viewBox="0 0 20 14"><path d="M0 1.200h20M3.500 7h13M7.500 12.700h4.500" stroke="#fff" stroke-width="2" /></svg>
            <svg class="caret" width="12" height="7" viewBox="0 0 12 7"><path d="M0 0h12L6 7z" fill="#fff" /></svg>
          </div>
          <div class="hours"><span v-for="(t, i) in ticks" :key="t" :style="{ left: tickLeft(i) }">{{ t }}</span></div>
        </section>
        <section class="row">
          <div class="vehicle">
            <svg class="eye" width="22" height="19" viewBox="0 0 576 512"><path :d="faEye" fill="#323d52" /></svg>
            <div class="who"><span>Bike</span><span class="id">V-0001</span><span>89C-01946</span></div>
            <svg class="moto" width="41" height="26" viewBox="0 0 41 26">
              <g fill="none" stroke="#323d52"><circle cx="8.300" cy="17.300" r="6.500" stroke-width="3.300" /><circle cx="32.700" cy="17.300" r="6.500" stroke-width="3.300" /><path d="M3 4.500h6l4 2.500M19 2.500h6l8 15" stroke-width="2.800" /></g>
              <path d="M8 17L14 7.500L22 5L27 7L29 10L22 18L20 20.500H13ZM25 1.500h7l3-1.500v7h-5z" fill="#323d52" />
            </svg>
          </div>
          <div class="track">
            <i v-for="(t, i) in ticks" :key="t" class="grid" :style="{ left: tickLeft(i) }"></i>
            <div class="dash"></div>
            <div class="rail"></div>
            <div v-for="d in depots" :key="d[0]" class="depot" :style="{ left: d[0] + 'px', width: d[1] + 'px' }">
              <span class="p1">5%</span>
              <svg width="32" height="31" viewBox="0 0 32 31"><path d="M0 7.500L16 0l16 7.500V31h-6.500V11.500h-19V31H0z" fill="#323d52" /><path d="M8 19h3.600v2.800H8zM12.600 19h3.600v2.800h-3.600zM8 23h3.600v2.800H8zM12.600 23h3.600v2.800h-3.600zM17.200 23h3.600v2.800h-3.600zM8 27.200h3.600V30H8zM12.600 27.200h3.600V30h-3.600zM17.200 27.200h3.600V30h-3.600zM21.500 27.200h3V30h-3z" fill="#323d52" /></svg>
              <span class="p2">93%</span>
            </div>
            <div v-for="v in visits" :key="v[0]" class="visit" :style="{ left: v[1] + 'px', width: v[2] + 'px' }">{{ v[0] }}</div>
          </div>
        </section>
        <div class="scroll"><i class="la"></i><i class="thumb"></i><i class="ra"></i></div>
        <footer class="foot">
          <div class="stats">
            <div v-for="s in stats" :key="s[0]" :style="{ width: s[2] + 'px' }"><span>{{ s[0] }}</span><span>{{ s[1] }}<sup v-if="s[0] === 'VOLUME/CAPACITY'">3</sup></span></div>
          </div>
          <div class="acts">
            <button class="a1">Actions <svg width="13" height="9" viewBox="0 0 13 9"><path d="M1.300 7.500L6.500 2.300L11.700 7.500" fill="none" stroke="#fff" stroke-width="2.600" /></svg></button>
            <button v-for="b in [['a2', 'Unlock', '#f85f05'], ['a3', 'Lock Route', '#388f3c'], ['a4', 'Optimize', '#ffb54c']]" :key="b[0]" :class="b[0]">
              <svg width="14" height="22" viewBox="0 0 14 22"><path d="M0 9h14v13H0z" fill="#fff" /><path d="M3 9V5a4 4 0 0 1 8 0v4" fill="none" stroke="#fff" stroke-width="1.600" /><path d="M4.500 14.500l2 2l3.200-3" fill="none" :stroke="b[2]" stroke-width="1.600" /></svg>
              <span>{{ b[1] }}</span>
            </button>
          </div>
        </footer>
      </main>
    </div>
    <i class="stray"></i>
  </div>
</template>

<style>
body { margin: 0; background: #fefefe; overflow: hidden; }
</style>

<style scoped>
* { box-sizing: border-box; }
.page { position: relative; width: 1920px; height: 844px; overflow: hidden; background: #fefefe; font-family: Roboto, "Liberation Sans", sans-serif; }
button { border: 0; margin: 0; font-family: inherit; }
i { font-style: normal; }
.top { display: flex; height: 62px; padding-left: 24px; }
.logo { margin-top: 11px; }
.brand { margin: 17px 0 0 3px; overflow: visible; }
.brand text { font: 800 23.500px Inter, Lato, sans-serif; fill: #2567b4; stroke: #2567b4; stroke-width: .3; }
.burger { margin: 25px 0 0 24px; width: 24px; height: 16px; display: flex; flex-direction: column; justify-content: space-between; }
.burger i { height: 1px; background: #4d86cc; }
.burger i:nth-child(2) { height: 2px; }
.user { margin-left: auto; width: 250px; display: flex; }
.avatar { margin-top: 13px; width: 50px; height: 43px; border-radius: 50%; background: #1c64b0; display: flex; align-items: center; justify-content: center; }
.name { margin: 20px 0 0 19px; width: 59px; font-size: 18px; line-height: 23px; font-weight: 300; color: #1c64b0; letter-spacing: -.4px; }
.chev { margin-top: 28px; margin-left: -1px; }
.mail { position: relative; margin: 22px 0 0 48px; height: 24px; }
.count { position: absolute; left: -33px; top: -10px; width: 45px; height: 21px; border-radius: 11px; background: #d64837; color: #fff; font: 700 13px/18px "Liberation Sans", Arial, sans-serif; text-align: center; box-shadow: 0 1px 2px #0004; }

.body { display: flex; height: 769px; }
.side { position: relative; width: 206px; background: #1c64b0; }
.item { display: flex; align-items: center; height: 51.200px; color: #fff; font-size: 18px; font-weight: 300; letter-spacing: -.24px; position: relative; }
.ico { width: 63px; margin-right: -8.500px; display: flex; justify-content: center; }
.gear { margin-left: 2px; }
.item.active { background: #19528f; }
.item.active::after { content: ""; position: absolute; right: 0; top: 10px; border: 15px solid transparent; border-left-width: 0; border-right-color: #fefefe; }
.item.sep { border-top: 1px solid #4a83c4; height: 50px; margin-top: -1px; }
.chat { position: absolute; left: 38px; top: 625px; width: 75px; height: 75px; border-radius: 50% 8px 50% 50%; background: #ffc617; box-shadow: 0 4px 8px #0006; display: flex; align-items: center; justify-content: center; }
.lang { position: absolute; left: 38px; top: 715px; width: 165px; height: 54px; background: #ffc617; display: flex; align-items: center; padding-left: 39px; gap: 10px; font-size: 18px; color: #111; font-weight: 400; letter-spacing: -.35px; }
.lang i { width: 20px; height: 20px; border: 3px solid #111; border-radius: 50%; margin-top: -4px; }

.main { width: 1711px; margin-left: 2px; border-left: 1px solid #e0e1e2; border-right: 1px solid #e0e1e2; }
.map { position: relative; height: 466px; border-top: 1px solid #dcdde0; overflow: hidden; width: 1709px; }
.canvas { display: block; }
.ln { fill: none; stroke-linejoin: round; vector-effect: non-scaling-stroke; }
.mt { text-anchor: middle; dominant-baseline: central; paint-order: stroke; stroke: #fff; stroke-opacity: .75; stroke-width: 2.500px; stroke-linejoin: round; font-family: Roboto, "Noto Sans", sans-serif; }
.town { font-size: 12px; font-weight: 600; fill: #5d7184; }
.townlight { font-size: 12px; font-weight: 500; fill: #7f90a5; }
.area { font-size: 12px; font-weight: 600; fill: #8b9db4; }
.big { font-size: 19px; font-weight: 600; fill: #5f6f80; }
.hanoi { font-size: 26px; font-weight: 500; fill: #45484d; }
.prov { font-size: 13.500px; font-weight: 500; fill: #8f9399; }
.poi { font-size: 17.500px; }
.teal { fill: #148fa5; }
.slate { fill: #5e7880; }
.green { fill: #2b934b; }
.water { font-size: 13px; fill: #4f83c8; stroke-opacity: .2; }
.lake { font-size: 17px; }
.flat { text-anchor: start; dominant-baseline: auto; }
.sh rect { fill: #3a76c8; }
.sh text { font-size: 11.500px; font-weight: 700; fill: #fff; text-anchor: middle; }
.sh.y rect { fill: #f9d13b; stroke: #d9ae1a; }
.sh.y text, .sh.w text { fill: #4b4630; font-weight: 500; }
.sh.w rect { fill: #fff; stroke: #6b6e74; }
.stop { font-size: 14px; font-weight: 700; fill: #4457c8; text-anchor: middle; }

.crumbs { position: absolute; left: 6px; top: 12px; display: flex; gap: 4px; }
.pb { height: 43px; background: #3598dc; color: #fff; font-size: 15px; font-weight: 700; letter-spacing: -.05px; padding: 0; display: flex; align-items: center; }
.list { width: 156px; padding-left: 21px; gap: 7px; border-radius: 2px; box-shadow: 0 1px 3px #0004; }
.pair { display: flex; box-shadow: 0 1px 3px #0003; }
.branch { width: 222px; padding-left: 19px; background: #3598dcaa; border-radius: 2px 0 0 2px; letter-spacing: 0; white-space: nowrap; }
.go { width: 60px; justify-content: center; border-radius: 0 2px 2px 0; }
.swatch { position: absolute; left: 6px; top: 67px; width: 44px; height: 44px; border-radius: 4px; background: #fff; padding: 6px; box-shadow: 0 2px 4px #0005; }
.swatch i { display: block; height: 32px; border-radius: 3px; background: #1c64b0; }
.kinds { position: absolute; left: 750px; top: 12px; width: 210px; height: 50px; background: #fff; border-radius: 2px; display: flex; line-height: 51px; font-size: 23px; text-align: center; box-shadow: 0 1px 3px #0004; }
.kinds b { width: 87px; font-weight: 500; color: #111; border-right: 1px solid #e6e6e6; }
.kinds span { flex: 1; color: #5a5a5a; font-weight: 400; font-size: 22.500px; }
.tools { position: absolute; left: 1304px; top: 6px; display: flex; gap: 4px; }
.ob { width: 195px; height: 41px; border: 1px solid #3598dc; border-radius: 2px; background: #fff; color: #3598dc; font-size: 15px; font-weight: 700; padding: 0 0 0 18px; text-align: left; white-space: nowrap; box-shadow: 0 1px 3px #0004; letter-spacing: 0; }
.filt { width: 199px; display: flex; align-items: center; gap: 8px; letter-spacing: -.1px; }
.square { position: absolute; left: 1646px; width: 50px; background: #fff; border-radius: 2px; box-shadow: 0 1px 4px #0003; display: flex; align-items: center; justify-content: center; height: 50px; }
.peg { top: 330px; }
.full { top: 405px; }
.google { position: absolute; left: 7px; top: 434px; font: 500 25px/32px Inter, Lato, sans-serif; letter-spacing: -1.200px; width: 82px; -webkit-text-stroke: .5px; text-shadow: 0 0 2px #fff; white-space: nowrap; }
.google .b { color: #4b86e0; } .google .r { color: #e54f41; } .google .y { color: #f5bb17; } .google .g { color: #3aa757; }
.credit { position: absolute; left: 1200px; top: 450px; display: flex; height: 18px; font-size: 12px; line-height: 21px; color: #333; background: #f5f5f5aa; white-space: nowrap; letter-spacing: .2px; padding-left: 6px; }
.c1 { width: 107px; } .c2 { width: 121px; } .c3 { width: 88px; } .c4 { width: 119px; }
.c2 i { display: inline-block; width: 73px; height: 6px; border: 2px solid #555; border-top: 0; }

.plan { height: 37px; background: #1c64b0; display: flex; align-items: center; color: #fff; padding-left: 19px; }
.switch { width: 36px; height: 19px; border: 1px solid #fff; border-radius: 2px; margin-top: -2px; }
.switch i { display: flex; gap: 1px; align-items: center; justify-content: center; width: 18px; height: 17px; background: #fff; }
.switch u { width: 1px; height: 5px; background: #1c64b0; }
.ptitle { margin-left: 19px; font-size: 18px; letter-spacing: -.4px; }
.dens { margin-left: auto; display: flex; align-items: center; height: 37px; padding-right: 17px; }
.down { margin-right: 19px; }
.all { width: 37px; font-size: 15.500px; letter-spacing: -.3px; }
.dens span:not(.all) { display: flex; flex-direction: column; align-items: center; justify-content: center; height: 37px; }
.d1 { width: 57px; background: #19487e; } .d2 { width: 57px; gap: 3px; } .d3 { width: 58px; gap: 3px; } .d4 { width: 60px; gap: 3px; }
.dens span i { background: #fff; width: 29px; height: 6px; }
.dens .d1 i { height: 7px; } .dens .d2 i { width: 26px; } .dens .d4 i { width: 26px; height: 5px; }
.tl { height: 31px; background: #19487e; }
.cell { width: 267px; height: 100%; border-right: 1px solid #fff; padding-left: 19px; color: #fff; font-size: 18px; line-height: 30px; letter-spacing: -.25px; display: flex; align-items: center; }
.tl .cell { padding-bottom: 2px; }
.vh { height: 30px; background: #1c64b0; display: flex; }
.vh .cell { padding-left: 18px; }
.vt { margin-left: 66px; width: 91px; font-size: 18px; letter-spacing: -.2px; }
.sort { margin-right: 19px; }
.hours { position: relative; flex: 1; overflow: hidden; }
.hours span { position: absolute; top: 0; transform: translateX(-50%); line-height: 30px; font-size: 16.500px; letter-spacing: -.3px; font-weight: 500; color: #fff; }
.row { height: 131px; background: #f6f6f6; display: flex; }
.vehicle { width: 268px; height: 125px; border-right: 2px solid #d9d9d9; display: flex; align-items: center; padding-left: 18px; color: #222; }
.who { margin-left: 18.500px; width: 104.500px; display: flex; flex-direction: column; font-size: 17.500px; line-height: 22px; font-weight: 300; letter-spacing: -.1px; }
.who .id { font-size: 16px; }
.moto { margin-top: -8px; }
.track { position: relative; width: 1442px; height: 131px; margin-left: -1px; overflow: hidden; flex: none; }
.grid { position: absolute; top: 0; height: 125px; width: 1px; background: #e6e6e6; }
.dash { position: absolute; left: 33px; right: 0; top: 18px; height: 40px; border-top: 1px dashed #c6c6c6; border-left: 1px dashed #c6c6c6; }
.rail { position: absolute; left: 60px; right: 0; top: 60px; height: 8px; background: #424f66; }
.depot { position: absolute; top: 40px; height: 46px; border: 1px solid #4b586b; border-radius: 8px; background: #fff; }
.depot svg { position: absolute; left: 9px; top: 7px; }
.depot span { position: absolute; top: 0; line-height: 45px; letter-spacing: -.4px; font-size: 18px; font-weight: 300; color: #2f333a; z-index: 2; }
.p1 { left: -13px; } .p2 { left: 41px; }
.visit { position: absolute; top: 43px; height: 39px; border: 1px solid #323d52; border-radius: 7px; background: #fff; text-align: center; line-height: 38px; font-size: 17.500px; font-weight: 400; color: #4c5159; }
.scroll { height: 21px; background: #f1f1f1; display: flex; align-items: center; }
.la, .ra { border: 5px solid transparent; border-left-width: 0; border-right-color: #4d4d4d; margin-left: 8px; }
.thumb { width: 526px; height: 17px; background: #c1c1c1; margin-left: 267px; }
.ra { transform: scaleX(-1); margin-left: auto; margin-right: 7px; }
.foot { height: 44px; background: #f5f5f6; display: flex; justify-content: space-between; }
.stats { display: flex; gap: 12.800px; padding: 9px 0 0 13.500px; color: #3a4556; font-size: 13px; line-height: 15px; font-weight: 400; letter-spacing: -.25px; flex: none; }
.stats div { display: flex; flex-direction: column; align-items: center; white-space: nowrap; }
.stats sup { font-size: 11px; line-height: 0; vertical-align: 5px; }
.acts { display: flex; gap: 3px; padding-top: 3px; flex: none; margin-right: 1px; }
.acts button { height: 39px; border-radius: 20px; color: #fff; font-size: 18px; font-weight: 500; letter-spacing: -.4px; padding: 0 0 0 19px; display: flex; align-items: center; gap: 12px; box-shadow: 0 0 1px #444; white-space: nowrap; }
.acts .a1 { width: 117px; background: #1c64b0; gap: 7px; }
.acts .a2 { width: 119px; background: #f85f05; }
.acts .a3 { width: 153px; background: #388f3c; }
.acts .a4 { width: 132px; background: #ffb54c; box-shadow: none; padding-left: 18px; }
</style>
<style scoped>
.stray { position: absolute; left: 295px; top: 839px; width: 1px; height: 5px; background: #ccc; }
</style>
